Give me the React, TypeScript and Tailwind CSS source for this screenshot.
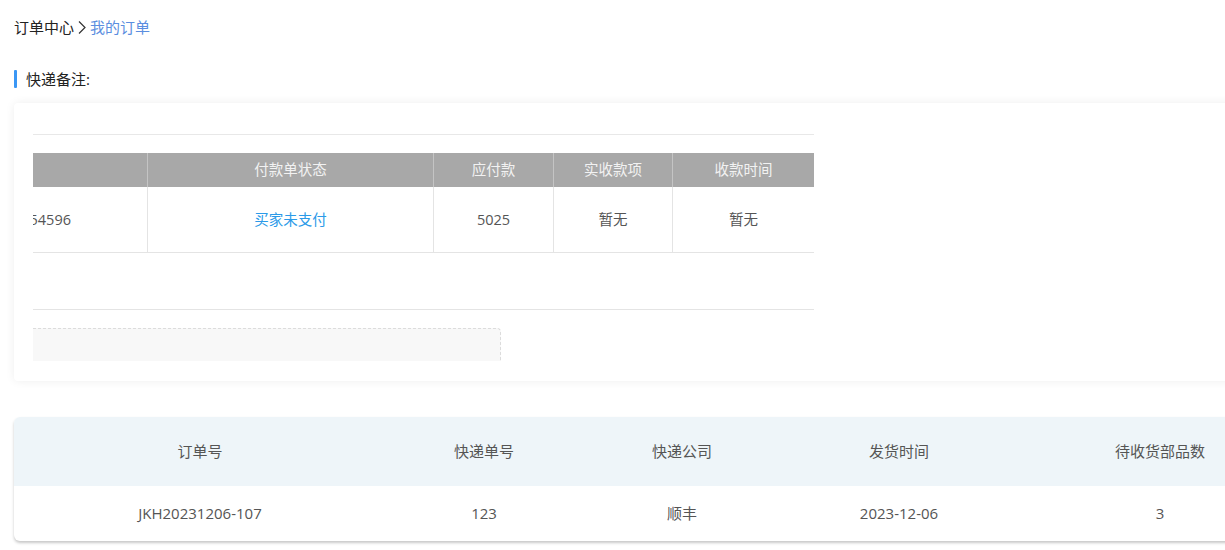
const payCols = [
  { label: '付款单状态', w: 'w-[286px]' },
  { label: '应付款', w: 'w-[120px]' },
  { label: '实收款项', w: 'w-[119px]' },
  { label: '收款时间', w: 'w-[141px]' },
];

const payRow = [
  { text: '买家未支付', blue: true },
  { text: '5025' },
  { text: '暂无' },
  { text: '暂无' },
];

const expressCols = [
  { label: '订单号', value: 'JKH20231206-107', w: 'w-[372px]' },
  { label: '快递单号', value: '123', w: 'w-[196px]' },
  { label: '快递公司', value: '顺丰', w: 'w-[200px]' },
  { label: '发货时间', value: '2023-12-06', w: 'w-[234px]' },
  { label: '待收货部品数', value: '3', w: 'w-[288px]' },
];

export default function App() {
  return (
    <div
      className="w-full overflow-hidden bg-white text-[15px] text-[#333]"
      style={{ fontFamily: '"Open Sans", "Noto Sans CJK SC", sans-serif' }}
    >
      <div className="min-w-[1310px] pl-[14px] pt-[17px] pb-[9px]">
        {/* Breadcrumb */}
        <div className="flex items-center h-[20px] leading-[20px]">
          <span className="text-[#222]">订单中心</span>
          <svg className="mx-[4px]" width="8" height="15" viewBox="0 0 8 15">
            <polyline points="1,1.5 7,7.5 1,13.5" fill="none" stroke="#333" strokeWidth="1.2" />
          </svg>
          <span className="text-[#5b8ee0]">我的订单</span>
        </div>

        {/* Section title */}
        <div className="mt-[33px] flex items-center h-[18px]">
          <div className="w-[3px] h-[18px] bg-[#3a97f5] rounded-[1px]" />
          <span className="ml-[9px] text-[#222] leading-[18px]">快递备注:</span>
        </div>

        {/* Payment card */}
        <div className="mt-[15px] bg-white rounded-[4px] shadow-[0_0_10px_rgba(0,0,0,0.07)] pl-[19px] pt-[31px] pb-[20px] text-[14.5px]">
          <div className="w-[781px] border-t border-[#e8e8e8]" />
          <div className="mt-[18px] w-[781px] overflow-hidden">
            <div className="flex flex-col">
              {/* header */}
              <div className="flex h-[34px] bg-[#a8a8a8] text-[#f2f2f2]">
                <div className="w-[115px] shrink-0 border-r border-[#c4c4c4]" />
                {payCols.map((c, i) => (
                  <div
                    key={c.label}
                    className={`${c.w} shrink-0 flex items-center justify-center ${i < payCols.length - 1 ? 'border-r border-[#c4c4c4]' : ''}`}
                  >
                    {c.label}
                  </div>
                ))}
              </div>
              {/* row */}
              <div className="flex h-[66px] border-b border-[#e4e4e4] text-[#555]">
                <div className="w-[115px] shrink-0 flex items-center justify-end pr-[76px] whitespace-nowrap border-r border-[#e4e4e4]">
                  FKD20231206154596
                </div>
                {payRow.map((c, i) => (
                  <div
                    key={i}
                    className={`${payCols[i].w} shrink-0 flex items-center justify-center ${c.blue ? 'text-[#2b9ae8]' : ''} ${i < payRow.length - 1 ? 'border-r border-[#e4e4e4]' : ''}`}
                  >
                    {c.text}
                  </div>
                ))}
              </div>
            </div>
          </div>
          <div className="mt-[56px] w-[781px] border-t border-[#e4e4e4]" />
          <div className="mt-[18px] w-[468px] h-[33px] bg-[#f8f8f8] border-t border-r border-dashed border-[#dcdcdc] rounded-tr-[4px]" />
        </div>

        {/* Express card */}
        <div className="mt-[36px] w-[1290px] rounded-[6px] overflow-hidden bg-white shadow-[0_2px_3px_rgba(0,0,0,0.22)]">
          <div className="flex h-[69px] bg-[#eef5f9] text-[#555]">
            {expressCols.map((c) => (
              <div key={c.label} className={`${c.w} flex items-center justify-center`}>
                {c.label}
              </div>
            ))}
          </div>
          <div className="flex h-[55px] text-[#555]">
            {expressCols.map((c) => (
              <div key={c.label} className={`${c.w} flex items-center justify-center`}>
                {c.value}
              </div>
            ))}
          </div>
        </div>
      </div>
    </div>
  );
}
